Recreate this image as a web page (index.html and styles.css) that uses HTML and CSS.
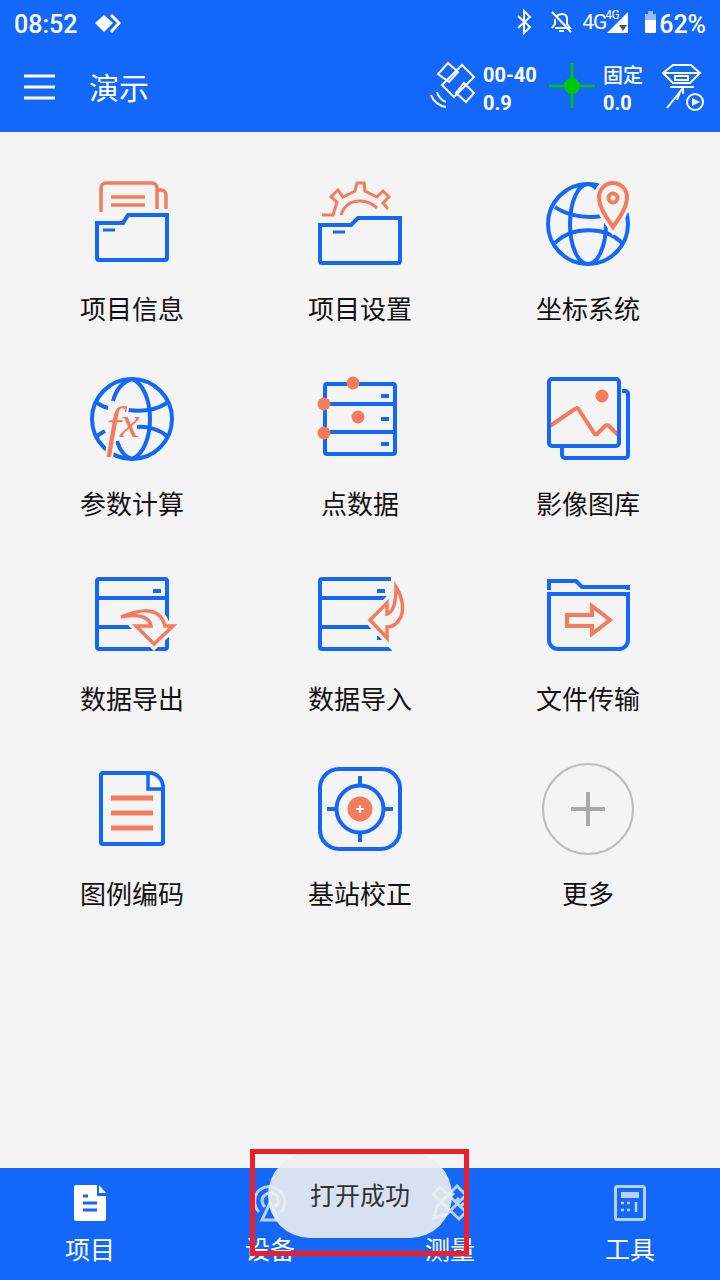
FILE: index.html
```html
<!DOCTYPE html>
<html lang="zh">
<head>
<meta charset="utf-8">
<title>演示</title>
<link rel="stylesheet" href="styles.css">
</head>
<body>
<div class="screen">
  <header class="top">
    <div class="status">
      <span class="time">08:52</span>
      <svg class="st-logo" viewBox="95 10 28 22"><path class="wf" d="M104,13L113,21L104,30L95,21Z"/><path class="wl3" d="M111,13L119,21L111,30"/></svg>
      <span class="grow"></span>
      <svg class="st-bt" viewBox="516 8 18 26"><path class="wl2" d="M519,15L531,26L525,32V10L531,16L519,27"/></svg>
      <svg class="st-bell" viewBox="550 9 24 24"><path class="wl2" d="M556,27H571L568,23V18C568,15 566,13 563,13C561,13 559,14 558,15M556,18V23L553,27M560,30H565M553,11L572,31"/></svg>
      <span class="net">4G</span><span class="net-sm">4G</span>
      <svg class="st-sig" viewBox="606 8 24 24"><path class="wf" d="M629,10V31H608Z"/><path class="dk" d="M620,23H628L624,29Z"/></svg>
      <svg class="st-bat" viewBox="645 8 13 26"><path class="wf dim" d="M649,10H654V13H657V20H646V13H649Z"/><path class="wf" d="M646,19H657V31a1,1 0 0 1-1,1H647a1,1 0 0 1-1-1Z"/></svg>
      <span class="pct">62%</span>
    </div>
    <div class="appbar">
      <svg class="menu" viewBox="23 72 33 30"><path class="wl3" d="M24,76H55M24,87H55M24,98H55"/></svg>
      <h1 class="title">演示</h1>
      <span class="grow"></span>
      <svg class="sat" viewBox="430 60 48 50"><path class="wl2" d="M449,63L459,72L450,82L439,74ZM463,65L475,77L455,97L443,85ZM465,83L475,93L467,102L457,93ZM432,95C434,101 440,106 447,107M438,92C439,96 443,101 447,102"/></svg>
      <div class="stat stat-a"><span>00-40</span><span>0.9</span></div>
      <svg class="fix" viewBox="548 62 48 48"><path class="gl" d="M549,86H595M572,63V108"/><circle class="gf" cx="572" cy="86" r="8"/></svg>
      <div class="stat stat-b"><span>固定</span><span>0.0</span></div>
      <svg class="rover" viewBox="661 62 44 50"><path class="wl2" d="M663,73L673,65H691L700,73L690,83H673ZM663,73H700M675,76H688V80H675ZM670,87H694M683,88L667,108M683,88V94M680,92L677,100"/><circle class="wl2" cx="695" cy="102" r="8"/><path class="wf" d="M692,98L700,102L692,106Z"/></svg>
    </div>
  </header>

  <main class="grid">
    <div class="cell">
      <svg class="ico" viewBox="82 172 100 100">
        <path class="o35" d="M101,212V188a5,5 0 0 1 5-5H152a5,5 0 0 1 5,5V209M157,190H161a5,5 0 0 1 5,5V209M111,197H145M111,205H145"/>
        <path class="b4" d="M97,223H123L128,215H167V258a2,2 0 0 1-2,2H99a2,2 0 0 1-2-2Z"/>
        <path class="b3" d="M103,230H115"/>
      </svg>
      <span class="label">项目信息</span>
    </div>
    <div class="cell">
      <svg class="ico" viewBox="310 172 100 100">
        <path class="o3" d="M322,215H333L337,202L331,197L338,190L343,197L355,191L357,183H364L365,191L377,197L383,191L389,197L383,203L388,209M341,215C344,206 351,201 360,201C367,201 373,204 377,208"/>
        <path class="b4" d="M320,225H351L358,218H400V261a2,2 0 0 1-2,2H322a2,2 0 0 1-2-2Z"/>
        <path class="b3" d="M333,232H345"/>
      </svg>
      <span class="label">项目设置</span>
    </div>
    <div class="cell">
      <svg class="ico" viewBox="538 172 100 100">
        <circle class="b4" cx="588" cy="224" r="40"/>
        <ellipse class="b4" cx="588" cy="224" rx="18" ry="40"/>
        <path class="b4" d="M555,207C566,215 585,219 602,216M555,243C572,226 605,226 622,243"/>
        <path class="halo" d="M613,227C606,217 599,207 599,197A14,14 0 0 1 627,197C627,207 620,217 613,227Z"/>
        <path class="o4" d="M613,227C606,217 599,207 599,197A14,14 0 0 1 627,197C627,207 620,217 613,227Z"/>
        <circle class="o4" cx="613" cy="198" r="4.5"/>
      </svg>
      <span class="label">坐标系统</span>
    </div>

    <div class="cell">
      <svg class="ico" viewBox="82 367 100 100">
        <circle class="b4" cx="132" cy="419" r="40"/>
        <path class="b4" d="M132,379C122,382 116,390 113,401M117,441C120,451 125,457 132,459M132,379C143,383 150,400 150,419C150,438 143,455 132,459"/>
        <path class="b4" d="M97,403C100,405 104,407 108,408M128,410C142,412 156,410 167,403M137,427C148,426 160,430 167,436M97,436C100,434 103,432 105,431"/>
        <text class="fx" x="106" y="445">f<tspan class="fx-x" x="120" y="437">x</tspan></text>
      </svg>
      <span class="label">参数计算</span>
    </div>
    <div class="cell">
      <svg class="ico" viewBox="310 367 100 100">
        <path class="b4" d="M327,384H393a2,2 0 0 1 2,2V452a2,2 0 0 1-2,2H327a2,2 0 0 1-2-2V386a2,2 0 0 1 2-2ZM325,404H395M325,432H395"/>
        <path class="b4" d="M381,396H389M381,419H389M381,444H389"/>
        <circle class="of" cx="353" cy="383" r="6.5"/>
        <circle class="of" cx="324" cy="404" r="6.5"/>
        <circle class="of" cx="358" cy="417" r="6.5"/>
        <circle class="of" cx="324" cy="433" r="6.5"/>
      </svg>
      <span class="label">点数据</span>
    </div>
    <div class="cell">
      <svg class="ico" viewBox="538 367 100 100">
        <path class="b4" d="M622,391H625a3,3 0 0 1 3,3V455a3,3 0 0 1-3,3H565a3,3 0 0 1-3-3V447"/>
        <path class="o4" d="M550,426L575,409C577,407 578,408 579,410L594,433C595,435 597,435 598,433L605,426C606,425 608,425 609,426L618,435"/>
        <rect class="b4" x="549" y="379" width="70" height="67" rx="3"/>
        <circle class="of" cx="602" cy="396" r="6.5"/>
      </svg>
      <span class="label">影像图库</span>
    </div>

    <div class="cell">
      <svg class="ico" viewBox="82 562 100 100">
        <path class="b4" d="M99,579H165a2,2 0 0 1 2,2V647a2,2 0 0 1-2,2H99a2,2 0 0 1-2-2V581a2,2 0 0 1 2-2ZM97,598H167M97,627H167"/>
        <path class="b4" d="M153,591H161"/>
        <path class="halo" d="M121,617C140,609 160,606 165,626H173L154,644L136,626H151C150,618 140,613 121,617Z"/>
        <path class="o35j" d="M121,617C140,609 160,606 165,626H173L154,644L136,626H151C150,618 140,613 121,617Z"/>
      </svg>
      <span class="label">数据导出</span>
    </div>
    <div class="cell">
      <svg class="ico" viewBox="310 562 100 100">
        <path class="b4" d="M392,579H322a2,2 0 0 0-2,2V647a2,2 0 0 0,2,2H392M320,598H392M320,627H392"/>
        <path class="b4" d="M377,591H385M377,638H385"/>
        <path class="halo" d="M370,620L387,603V614C394,612 396,600 396,587C403,598 405,612 399,620C396,625 392,627 387,627V638Z"/>
        <path class="o35j" d="M370,620L387,603V614C394,612 396,600 396,587C403,598 405,612 399,620C396,625 392,627 387,627V638Z"/>
      </svg>
      <span class="label">数据导入</span>
    </div>
    <div class="cell">
      <svg class="ico" viewBox="538 562 100 100">
        <path class="b4" d="M549,590V581H576L582,587H628V590"/>
        <path class="b4" d="M549,594H628V640a9,9 0 0 1-9,9H558a9,9 0 0 1-9-9Z"/>
        <path class="o4j" d="M567,615H592V606L610,620L592,634V626H567Z"/>
      </svg>
      <span class="label">文件传输</span>
    </div>

    <div class="cell">
      <svg class="ico" viewBox="82 757 100 100">
        <path class="b4" d="M103,773H149A14,15 0 0 1 163,788V842a2,2 0 0 1-2,2H103a2,2 0 0 1-2-2V775a2,2 0 0 1 2-2Z"/>
        <path class="b4 fold" d="M148,773V789H163A14,15 0 0 0 148,773Z"/>
        <path class="o5" d="M111,798H153M111,813H153M111,828H153"/>
      </svg>
      <span class="label">图例编码</span>
    </div>
    <div class="cell">
      <svg class="ico" viewBox="310 757 100 100">
        <rect class="b4" x="320" y="769" width="80" height="80" rx="19"/>
        <circle class="b4" cx="360" cy="809" r="23.5"/>
        <path class="b4" d="M360,776V785M360,833V842M327,809H336M384,809H393"/>
        <circle class="of" cx="360" cy="809" r="12.5"/>
        <path class="wl2" d="M360,805V813M356,809H364"/>
      </svg>
      <span class="label">基站校正</span>
    </div>
    <div class="cell">
      <svg class="ico" viewBox="538 757 100 100">
        <circle class="more-c" cx="588" cy="809" r="45"/>
        <path class="more-p" d="M571,809H605M588,792V826"/>
      </svg>
      <span class="label">更多</span>
    </div>
  </main>

  <nav class="nav">
    <div class="tab">
      <svg class="tab-ico" viewBox="72 1183 36 40"><path class="wf" d="M76,1185H97V1196H106V1219a2,2 0 0 1-2,2H76a2,2 0 0 1-2-2V1187a2,2 0 0 1,2-2ZM99,1185L106,1193H99Z"/><path class="bl3" d="M83,1196H88M83,1203H97M83,1210H97"/></svg>
      <span class="tab-t">项目</span>
    </div>
    <div class="tab">
      <svg class="tab-ico dimmed" viewBox="252 1183 36 40"><path class="wl3" d="M259,1212C253,1206 253,1194 261,1189C267,1185 275,1186 280,1191C287,1197 286,1207 281,1212M265,1207C261,1203 261,1198 265,1195C268,1192 273,1192 276,1195C279,1198 279,1203 275,1207M270,1203L262,1220H278Z"/></svg>
      <span class="tab-t">设备</span>
    </div>
    <div class="tab">
      <svg class="tab-ico dimmed" viewBox="432 1183 36 40"><path class="wl3" d="M434,1218L437,1206L457,1186L466,1195L446,1215ZM440,1187L466,1212L459,1219L433,1194ZM450,1197L454,1193M455,1202L459,1198M460,1207L464,1203"/></svg>
      <span class="tab-t">测量</span>
    </div>
    <div class="tab">
      <svg class="tab-ico dimmed" viewBox="612 1183 36 40"><rect class="wl3" x="615.5" y="1186.5" width="29" height="33" rx="2"/><rect class="wfs" x="621" y="1192" width="18" height="6"/><path class="wl3 thin" d="M621,1203H624M627,1203H630M621,1210H624M627,1210H630M636,1202V1212"/></svg>
      <span class="tab-t">工具</span>
    </div>
  </nav>

  <div class="toast">打开成功</div>
  <div class="mark"></div>
</div>
</body>
</html>
```
FILE: styles.css
```css
* { box-sizing: border-box; margin: 0; padding: 0; }
html, body { width: 720px; height: 1280px; overflow: hidden; }
body { background: #f4f4f4; font-family: "Noto Sans CJK SC", "Noto Sans", sans-serif; }
svg { display: block; overflow: visible; flex: none; }

.screen { position: relative; width: 720px; height: 1280px; display: flex; flex-direction: column; }
.top { height: 132px; background: #1368fa; color: #fff; flex: none; }
.grow { flex: 1; }

.status { height: 48px; display: flex; align-items: center; padding: 0 14px; font-family: Roboto, sans-serif; }
.time { font-size: 25px; font-weight: 500; width: 63px; }
.st-logo { width: 28px; height: 22px; margin-left: 18px; margin-top: -3px; }
.st-bt { width: 18px; height: 26px; margin-top: -4px; }
.st-bell { width: 24px; height: 24px; margin-left: 16px; margin-top: -4px; }
.net { font-size: 21px; margin-left: 9px; margin-top: -4px; letter-spacing: -1px; width: 23px; }
.net-sm { font-size: 12px; margin-top: -18px; margin-right: -12px; width: 13px; letter-spacing: -.5px; }
.st-sig { width: 24px; height: 24px; margin-top: -4px; margin-left: -1px; }
.st-bat { width: 13px; height: 26px; margin-left: 15px; margin-top: -4px; }
.pct { font-size: 25px; font-weight: 500; margin-left: 2px; }

.appbar { height: 84px; display: flex; align-items: center; padding: 0 15px 0 23px; }
.menu { width: 33px; height: 30px; margin-top: -6px; }
.title { font-size: 30px; font-weight: 400; margin-left: 33px; line-height: 40px; margin-top: -8px; }
.sat { width: 48px; height: 50px; margin-top: -10px; }
.stat { display: flex; flex-direction: column; font-family: Roboto, sans-serif; font-weight: 700; font-size: 20px; line-height: 28px; margin-top: -3px; }
.stat-a { width: 65px; margin-left: 6px; }
.fix { width: 48px; height: 48px; margin-top: -8px; }
.stat-b { width: 58px; margin-left: 7px; }
.stat-b span:first-child { font-family: "Noto Sans CJK SC", sans-serif; font-size: 20px; font-weight: 500; }
.rover { width: 44px; height: 50px; margin-top: -6px; }

.grid { flex: 1; display: grid; grid-template-columns: repeat(3, 228px); grid-auto-rows: 195px; padding: 40px 18px 0; }
.cell { display: flex; flex-direction: column; align-items: center; }
.ico { width: 100px; height: 100px; }
.label { font-size: 26px; line-height: 30px; margin-top: 21px; color: #111; }

.nav { height: 112px; background: #1368fa; display: grid; grid-template-columns: repeat(4, 180px); flex: none; }
.tab { display: flex; flex-direction: column; align-items: center; padding-top: 15px; color: #fff; }
.tab-ico { width: 36px; height: 40px; }
.tab-t { font-size: 25px; line-height: 30px; margin-top: 10px; }
.dimmed { opacity: .7; }

.toast { position: absolute; left: 268px; top: 1153px; width: 184px; height: 85px; border-radius: 42px; background: rgba(238,238,238,.9); color: #333; font-size: 25px; text-align: center; line-height: 83px; }
.mark { position: absolute; left: 250px; top: 1149px; width: 219px; height: 107px; border: 5px solid #f01e28; }

/* svg paints */
.b4, .b3, .o4, .o4j, .o3, .o35, .o35j, .o5, .wl2, .wl3, .bl3, .gl, .more-c, .more-p, .halo { fill: none; }
.b4 { stroke: #1368fa; stroke-width: 4; }
.fold { fill: #fff; stroke-width: 3.5; }
.b3 { stroke: #1368fa; stroke-width: 3; }
.o3 { stroke: #f47c5c; stroke-width: 3; }
.o35 { stroke: #f47c5c; stroke-width: 3.5; }
.o35j { stroke: #f47c5c; stroke-width: 3.5; stroke-linejoin: miter; }
.o4 { stroke: #f47c5c; stroke-width: 4; }
.o4j { stroke: #f47c5c; stroke-width: 4; }
.o5 { stroke: #f47c5c; stroke-width: 5; }
.of { fill: #f47c5c; }
.halo { fill: #f4f4f4; stroke: #f4f4f4; stroke-width: 10; }
.fx { font-family: "Liberation Serif", serif; font-style: italic; font-size: 54px; fill: #f47c5c; stroke: #f4f4f4; stroke-width: 4; paint-order: stroke; }
.fx-x { font-size: 44px; }
.more-c { stroke: #bdbdbd; stroke-width: 2; }
.more-p { stroke: #a9a9a9; stroke-width: 4; }
.wf { fill: #fff; }
.dim { opacity: .55; }
.dk { fill: #555; }
.wl2 { stroke: #fff; stroke-width: 2; }
.wl3 { stroke: #fff; stroke-width: 3; }
.thin { stroke-width: 2.5; }
.wfs { fill: #fff; }
.bl3 { stroke: #1368fa; stroke-width: 3; }
.gl { stroke: #00c800; stroke-width: 2.5; }
.gf { fill: #00c800; }
```
